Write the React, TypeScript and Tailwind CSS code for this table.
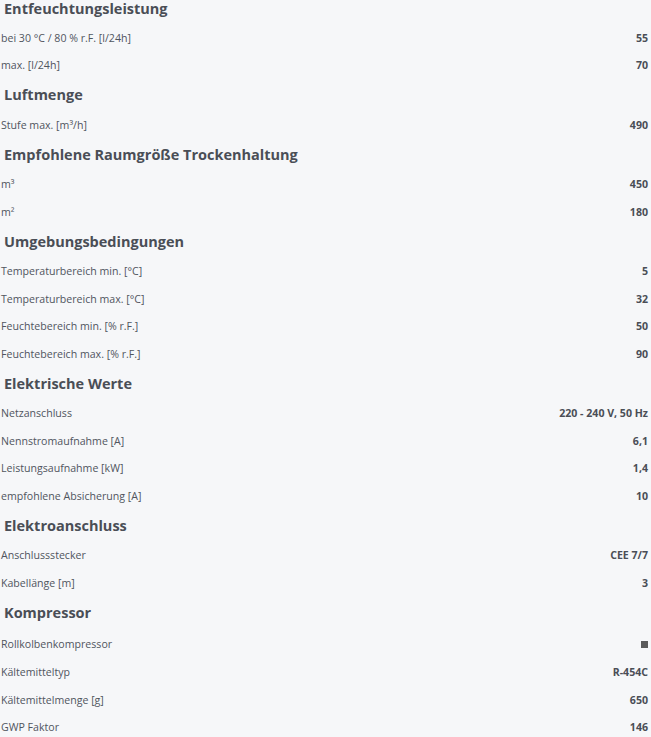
import React from "react";

type Section = { title: string; rows: [string, string][] };

const sections: Section[] = [
  {
    title: "Entfeuchtungsleistung",
    rows: [
      ["bei 30 °C / 80 % r.F. [l/24h]", "55"],
      ["max. [l/24h]", "70"],
    ],
  },
  { title: "Luftmenge", rows: [["Stufe max. [m³/h]", "490"]] },
  {
    title: "Empfohlene Raumgröße Trockenhaltung",
    rows: [
      ["m³", "450"],
      ["m²", "180"],
    ],
  },
  {
    title: "Umgebungsbedingungen",
    rows: [
      ["Temperaturbereich min. [°C]", "5"],
      ["Temperaturbereich max. [°C]", "32"],
      ["Feuchtebereich min. [% r.F.]", "50"],
      ["Feuchtebereich max. [% r.F.]", "90"],
    ],
  },
  {
    title: "Elektrische Werte",
    rows: [
      ["Netzanschluss", "220 - 240 V, 50 Hz"],
      ["Nennstromaufnahme [A]", "6,1"],
      ["Leistungsaufnahme [kW]", "1,4"],
      ["empfohlene Absicherung [A]", "10"],
    ],
  },
  {
    title: "Elektroanschluss",
    rows: [
      ["Anschlussstecker", "CEE 7/7"],
      ["Kabellänge [m]", "3"],
    ],
  },
  {
    title: "Kompressor",
    rows: [
      ["Rollkolbenkompressor", "■"],
      ["Kältemitteltyp", "R-454C"],
      ["Kältemittelmenge [g]", "650"],
      ["GWP Faktor", "146"],
    ],
  },
];

export default function App() {
  return (
    <div
      className="w-[651px] h-[737px] overflow-hidden bg-[#f6f7f9] text-[#50555e]"
      style={{ fontFamily: '"Open Sans", "Liberation Sans", sans-serif' }}
    >
      {sections.map((s, i) => (
        <div key={s.title} className={i === 0 ? "" : "mt-[8px]"}>
          <div
            className={`h-[24px] pl-[4px] text-[14.5px] font-bold text-[#4a4e56] ${
              i === 0 ? "leading-[18px]" : "leading-[15px]"
            }`}
          >
            {s.title}
          </div>
          {s.rows.map(([l, v]) => (
            <div
              key={l}
              className={`flex items-center justify-between pl-[1px] pr-[3px] pt-[2px] text-[10.6px] ${
                v === "■" ? "h-[30px]" : "h-[27.5px]"
              }`}
            >
              <span>{l}</span>
              {v === "■" ? (
                <span className="inline-block w-[7px] h-[7px] bg-[#5b5b5b]" />
              ) : (
                <span className="font-bold text-[#4a4e56]">{v}</span>
              )}
            </div>
          ))}
        </div>
      ))}
    </div>
  );
}
